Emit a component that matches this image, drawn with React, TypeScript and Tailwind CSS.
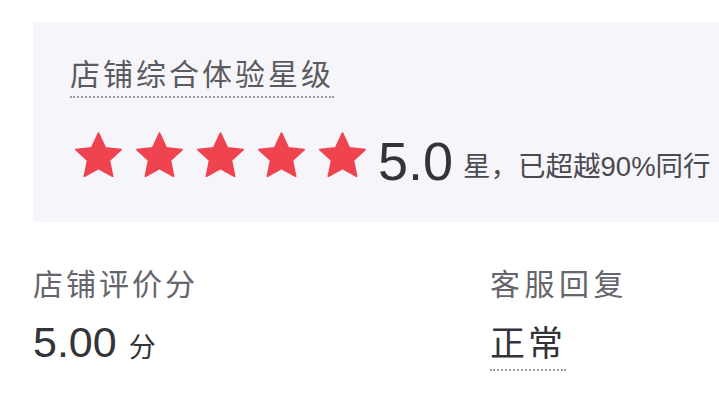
const cjk = "font-['Liberation_Sans','Noto_Sans_CJK_SC',sans-serif]";

function Star() {
  return (
    <svg viewBox="1 1.1 22 21" className="h-[45px] w-[47px]" aria-hidden>
      <path
        d="M12 1.6l3.2 6.9 7.4.8-5.5 5.1 1.5 7.4L12 18.1l-6.6 3.7 1.5-7.4L1.4 9.3l7.4-.8z"
        fill="#ef4350"
        stroke="#ef4350"
        strokeWidth="0.8"
        strokeLinejoin="round"
      />
    </svg>
  );
}

export default function App() {
  return (
    <div className={`min-h-[401px] w-[719px] overflow-hidden bg-white pl-[33px] pt-[22px] ${cjk}`}>
      <section className="w-[720px] bg-[#f6f6fa] pb-[32px] pl-[37px] pt-[38px]">
        <h2 className="w-fit border-b-2 border-dotted border-[#9a9aa2] pb-[6px] text-[30px] font-normal leading-none tracking-[3px] text-[#5a5a60]">
          店铺综合体验星级
        </h2>
        <div className="mt-[34px] flex items-end whitespace-nowrap">
          <div className="ml-[5px] flex gap-[14px] pb-[13px]">
            {[0, 1, 2, 3, 4].map((i) => (
              <Star key={i} />
            ))}
          </div>
          <span className="ml-[12px] pb-[2px] text-[54px] leading-none text-[#333338]">5.0</span>
          <span className="ml-[10px] pb-[10px] text-[27.5px] leading-none text-[#4a4a50]">
            星，已超越90%同行
          </span>
        </div>
      </section>

      <div className="mt-[48px] flex">
        <div className="w-[457px]">
          <p className="text-[30px] leading-none tracking-[3px] text-[#66646c]">店铺评价分</p>
          <p className="mt-[21px] flex items-baseline text-[#333338]">
            <span className="text-[43px] leading-none">5.00</span>
            <span className="ml-[12px] text-[27px] leading-none">分</span>
          </p>
        </div>
        <div>
          <p className="text-[30px] leading-none tracking-[4.5px] text-[#66646c]">客服回复</p>
          <p className="mt-[26px] w-fit border-b-2 border-dotted border-[#9a9aa2] pb-[8px] text-[35px] leading-none tracking-[3px] text-[#333338]">
            正常
          </p>
        </div>
      </div>
    </div>
  );
}
